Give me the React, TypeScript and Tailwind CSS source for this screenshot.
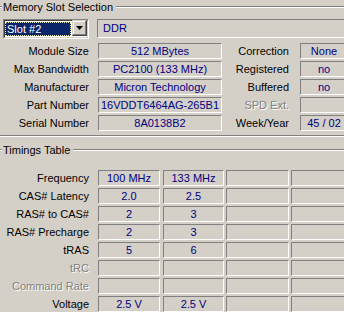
import React from "react";

const sunken =
  "border border-t-[#808080] border-l-[#808080] border-b-white border-r-white";

function Box({ w, children, align = "center" }: { w: string; children?: React.ReactNode; align?: string }) {
  return (
    <div
      className={`${w} h-[16px] shrink-0 ${sunken} flex items-center ${align === "center" ? "justify-center" : "justify-start pl-[4px]"} text-[#000080] whitespace-nowrap overflow-hidden leading-none`}
    >
      {children}
    </div>
  );
}

function Label({ w, children, disabled }: { w: string; children: React.ReactNode; disabled?: boolean }) {
  return (
    <div
      className={`${w} shrink-0 text-right whitespace-nowrap leading-none ${
        disabled ? "text-[#808080] [text-shadow:1px_1px_0_#ffffff]" : "text-black"
      }`}
    >
      {children}
    </div>
  );
}

function Etched({ className = "" }: { className?: string }) {
  return <div className={`h-[2px] border-t border-t-[#808080] border-b border-b-white ${className}`} />;
}

function Title({ text }: { text: string }) {
  return (
    <div className="h-[14px] flex items-center">
      <Etched className="w-[2px] shrink-0" />
      <div className="px-[1px] whitespace-nowrap leading-none text-black">{text}</div>
      <Etched className="flex-1 ml-[2px]" />
    </div>
  );
}

function InfoRow({
  label,
  value,
  label2,
  value2,
  disabled2,
}: {
  label: string;
  value: string;
  label2: string;
  value2: string;
  disabled2?: boolean;
}) {
  return (
    <div className="flex items-center h-[16px]">
      <Label w="w-[89px]">{label}</Label>
      <div className="w-[9px] shrink-0" />
      <Box w="w-[124px]">{value}</Box>
      <Label w="w-[67px]" disabled={disabled2}>
        {label2}
      </Label>
      <div className="w-[11px] shrink-0" />
      <Box w="w-[48px]">{value2}</Box>
    </div>
  );
}

function TimingRow({ label, a, b, disabled }: { label: string; a?: string; b?: string; disabled?: boolean }) {
  return (
    <div className="flex items-center h-[16px]">
      <Label w="w-[89px]" disabled={disabled}>
        {label}
      </Label>
      <div className="w-[9px] shrink-0" />
      <Box w="w-[62px]">{a}</Box>
      <div className="w-[3px] shrink-0" />
      <Box w="w-[61px]">{b}</Box>
      <div className="w-[2px] shrink-0" />
      <Box w="w-[63px]" />
      <div className="w-[2px] shrink-0" />
      <Box w="w-[60px]" />
    </div>
  );
}

export default function App() {
  return (
    <div className="w-[344px] h-[312px] overflow-hidden bg-[#d4d0c8] font-['Liberation_Sans',Arial,sans-serif] text-[11px]">
      {/* Memory Slot Selection */}
      <div>
        <Title text="Memory Slot Selection" />
        <div className="flex items-start mt-[5px] pl-[3px]">
          <div className={`w-[86px] h-[20px] shrink-0 ${sunken}`}>
            <div className="w-full h-full border border-t-[#404040] border-l-[#404040] border-b-[#d4d0c8] border-r-[#d4d0c8] bg-white flex items-start">
              <div className="w-[66px] h-[14px] mt-[1px] bg-[#0a246a] border border-dotted border-[#e8e8a0] flex items-center pl-[1px] text-white leading-none whitespace-nowrap">
                Slot #2
              </div>
              <div className="w-[1px]" />
              <div className="w-[15px] h-[16px] -mt-[1px] bg-[#d4d0c8] border border-t-[#d4d0c8] border-l-[#d4d0c8] border-b-[#404040] border-r-[#404040] shadow-[inset_-1px_-1px_#808080,inset_1px_1px_#ffffff] flex items-center justify-center">
                <svg width="7" height="4" viewBox="0 0 7 4">
                  <path d="M0 0h7L3.5 4z" fill="#000" />
                </svg>
              </div>
            </div>
          </div>
          <div className="w-[8px] shrink-0" />
          <div className={`w-[260px] h-[19px] shrink-0 ${sunken} flex items-center pl-[5px] text-[#000080] leading-none`}>
            DDR
          </div>
        </div>
        <div className="flex flex-col gap-[2px] mt-[4px]">
          <InfoRow label="Module Size" value="512 MBytes" label2="Correction" value2="None" />
          <InfoRow label="Max Bandwidth" value="PC2100 (133 MHz)" label2="Registered" value2="no" />
          <InfoRow label="Manufacturer" value="Micron Technology" label2="Buffered" value2="no" />
          <InfoRow label="Part Number" value="16VDDT6464AG-265B1" label2="SPD Ext." value2="" disabled2 />
          <InfoRow label="Serial Number" value="8A0138B2" label2="Week/Year" value2="45 / 02" />
        </div>
        <Etched className="mt-[4px]" />
      </div>

      {/* Timings Table */}
      <div className="mt-[6px]">
        <Title text="Timings Table" />
        <div className="flex flex-col gap-[2px] mt-[13px]">
          <TimingRow label="Frequency" a="100 MHz" b="133 MHz" />
          <TimingRow label="CAS# Latency" a="2.0" b="2.5" />
          <TimingRow label="RAS# to CAS#" a="2" b="3" />
          <TimingRow label="RAS# Precharge" a="2" b="3" />
          <TimingRow label="tRAS" a="5" b="6" />
          <TimingRow label="tRC" disabled />
          <TimingRow label="Command Rate" disabled />
          <TimingRow label="Voltage" a="2.5 V" b="2.5 V" />
        </div>
      </div>
    </div>
  );
}
